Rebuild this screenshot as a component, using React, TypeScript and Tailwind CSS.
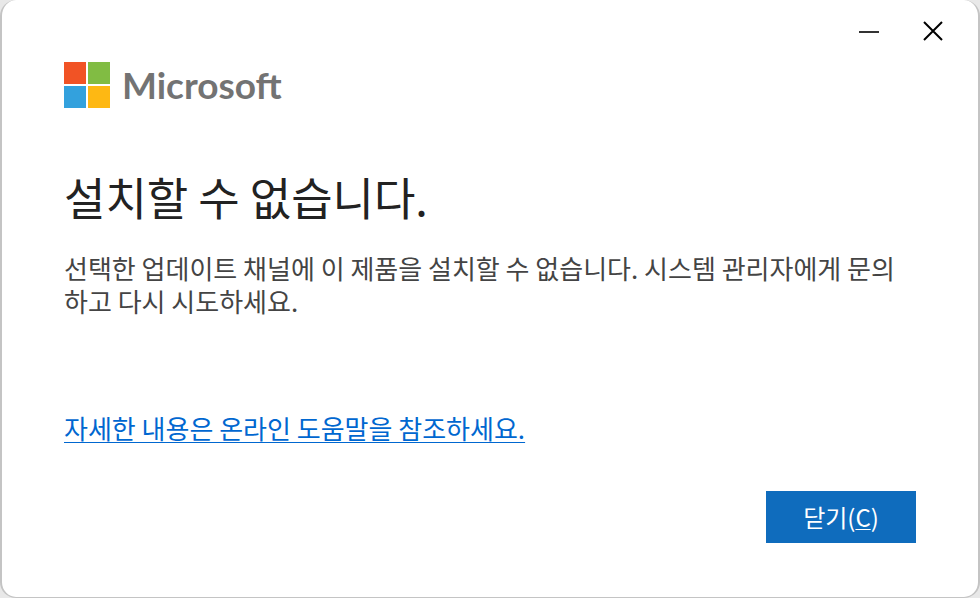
function MicrosoftLogo() {
  return (
    <div className="flex h-12 items-center gap-3">
      <div className="grid grid-cols-2 gap-0.5">
        <span className="size-[22px] bg-[#f15325]" />
        <span className="size-[22px] bg-[#81bc43]" />
        <span className="size-[22px] bg-[#33a1dd]" />
        <span className="size-[22px] bg-[#feb813]" />
      </div>
      <span className="font-[Lato,sans-serif] text-[37px] leading-10 font-bold text-[#737373]">Microsoft</span>
    </div>
  )
}

export default function App() {
  return (
    <div className="min-h-screen bg-[#e8e8e8] font-['Noto_Sans_CJK_KR',sans-serif]">
      <main className="relative flex min-h-screen flex-col rounded-2xl border-x-2 border-b border-[#c4c4c4] bg-white px-[62px] pt-[61px] pb-[54px]">
        <div className="absolute top-0 right-0 flex">
          <button type="button" aria-label="최소화" className="flex h-[62px] w-16 items-center justify-center">
            <svg className="size-5" viewBox="0 0 20 20" stroke="#333" strokeWidth="2">
              <path d="M0 11h20" />
            </svg>
          </button>
          <button type="button" aria-label="닫기" className="mr-[13px] flex h-[62px] w-16 items-center justify-center">
            <svg className="size-5" viewBox="0 0 20 20" stroke="#000" strokeWidth="2">
              <path d="M1 1l18 18M19 1L1 19" />
            </svg>
          </button>
        </div>

        <MicrosoftLogo />

        <h1 className="mt-14 text-[45px] leading-[64px] text-[#222]">설치할 수 없습니다.</h1>
        <p className="mt-[22px] text-[26px] leading-[33px] break-all text-[#444]">
          선택한 업데이트 채널에 이 제품을 설치할 수 없습니다. 시스템 관리자에게 문의하고 다시 시도하세요.
        </p>
        <a
          href="#help"
          className="mt-[94px] self-start text-[26px] leading-[33px] text-[#0067d0] underline decoration-1 underline-offset-3"
        >
          자세한 내용은 온라인 도움말을 참조하세요.
        </a>

        <button type="button" className="mt-auto h-[52px] w-[150px] self-end bg-[#0f6cbd] text-2xl text-white">
          닫기(<span className="underline decoration-1 underline-offset-2">C</span>)
        </button>
      </main>
    </div>
  )
}
